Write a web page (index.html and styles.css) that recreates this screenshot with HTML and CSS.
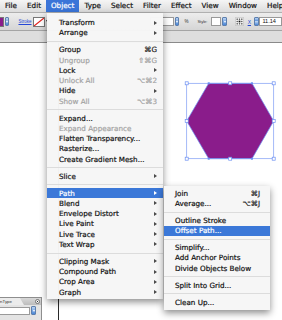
FILE: index.html
```html
<!DOCTYPE html>
<html lang="en">
<head>
    <meta charset="UTF-8">
    <title>Illustrator - Object menu</title>
    <link rel="stylesheet" href="styles.css">
</head>
<body>
<div class="screen">

    <div class="menubar">
        <span class="mb-item">File</span>
        <span class="mb-item">Edit</span>
        <span class="mb-item active">Object</span>
        <span class="mb-item">Type</span>
        <span class="mb-item">Select</span>
        <span class="mb-item">Filter</span>
        <span class="mb-item">Effect</span>
        <span class="mb-item">View</span>
        <span class="mb-item">Window</span>
        <span class="mb-item">Help</span>
    </div>

    <div class="controlbar">
        <span class="swatch fill"></span>
        <span class="drop"></span>
        <span class="link stroke-link">Stroke</span>
        <span class="swatch stroke">
            <svg width="10" height="8" viewBox="0 0 10 8"><line x1="0" y1="8" x2="10" y2="0" stroke="#e0201c" stroke-width="1.2"/></svg>
        </span>
        <span class="drop plain"></span>
        <span class="field opacity"></span>
        <span class="drop"></span>
        <span class="label pct">%</span>
        <span class="label style-label">Style:</span>
        <span class="field style"></span>
        <span class="drop"></span>
        <span class="refpoint">
            <svg width="9" height="9" viewBox="0 0 9 9">
                <rect x="0.5" y="0.5" width="8" height="8" fill="#fff" stroke="#888" stroke-width="0.6" stroke-dasharray="1 1"/>
                <rect x="1.5" y="1.5" width="1.4" height="1.4" fill="#555"/>
                <rect x="3.8" y="1.5" width="1.4" height="1.4" fill="#555"/>
                <rect x="6.1" y="1.5" width="1.4" height="1.4" fill="#555"/>
                <rect x="1.5" y="3.8" width="1.4" height="1.4" fill="#555"/>
                <rect x="3.6" y="3.6" width="1.8" height="1.8" fill="#111"/>
                <rect x="6.1" y="3.8" width="1.4" height="1.4" fill="#555"/>
                <rect x="1.5" y="6.1" width="1.4" height="1.4" fill="#555"/>
                <rect x="3.8" y="6.1" width="1.4" height="1.4" fill="#555"/>
                <rect x="6.1" y="6.1" width="1.4" height="1.4" fill="#555"/>
            </svg>
        </span>
        <span class="link x-link">X</span>
        <span class="stepper"></span>
        <span class="field xval">11.14</span>
    </div>

    <div class="docbar"></div>

    <div class="canvas">
        <div class="artboard-edge"></div>

        <svg class="hexagon" width="100" height="86" viewBox="180 78 100 86">
            <polygon points="208.7,83.3 252,83.3 273.7,121 252,158.7 208.7,158.7 186.7,121" fill="#8a1c8b" stroke="#6b8ff2" stroke-width="0.7"/>
            <rect x="186.7" y="83.3" width="87" height="75.4" fill="none" stroke="#7d9cf4" stroke-width="0.7"/>
            <g fill="#fff" stroke="#6b8ff2" stroke-width="0.7">
                <rect x="185.2" y="81.8" width="3" height="3"/>
                <rect x="228.7" y="81.8" width="3" height="3"/>
                <rect x="272.2" y="81.8" width="3" height="3"/>
                <rect x="185.2" y="119.5" width="3" height="3"/>
                <rect x="272.2" y="119.5" width="3" height="3"/>
                <rect x="185.2" y="157.2" width="3" height="3"/>
                <rect x="228.7" y="157.2" width="3" height="3"/>
                <rect x="272.2" y="157.2" width="3" height="3"/>
            </g>
            <g fill="#6b8ff2">
                <rect x="207.7" y="82.3" width="2" height="2"/>
                <rect x="251" y="82.3" width="2" height="2"/>
                <rect x="207.7" y="157.7" width="2" height="2"/>
                <rect x="251" y="157.7" width="2" height="2"/>
            </g>
        </svg>

        <div class="panel">
            <div class="panel-head">
                <span class="panel-tab">OpenType</span>
                <span class="panel-btn"></span>
            </div>
            <div class="panel-body">
                <span class="panel-field"></span>
                <span class="drop"></span>
            </div>
        </div>
    </div>

    <div class="menu object-menu">
        <div class="item"><span>Transform</span><i class="arrow"></i></div>
        <div class="item"><span>Arrange</span><i class="arrow"></i></div>
        <div class="sep"></div>
        <div class="item"><span>Group</span><span class="key">⌘G</span></div>
        <div class="item off"><span>Ungroup</span><span class="key">⇧⌘G</span></div>
        <div class="item"><span>Lock</span><i class="arrow"></i></div>
        <div class="item off"><span>Unlock All</span><span class="key">⌥⌘2</span></div>
        <div class="item"><span>Hide</span><i class="arrow"></i></div>
        <div class="item off"><span>Show All</span><span class="key">⌥⌘3</span></div>
        <div class="sep"></div>
        <div class="item"><span>Expand...</span></div>
        <div class="item off"><span>Expand Appearance</span></div>
        <div class="item"><span>Flatten Transparency...</span></div>
        <div class="item"><span>Rasterize...</span></div>
        <div class="item"><span>Create Gradient Mesh...</span></div>
        <div class="sep"></div>
        <div class="item"><span>Slice</span><i class="arrow"></i></div>
        <div class="sep"></div>
        <div class="item active"><span>Path</span><i class="arrow"></i></div>
        <div class="item"><span>Blend</span><i class="arrow"></i></div>
        <div class="item"><span>Envelope Distort</span><i class="arrow"></i></div>
        <div class="item"><span>Live Paint</span><i class="arrow"></i></div>
        <div class="item"><span>Live Trace</span><i class="arrow"></i></div>
        <div class="item"><span>Text Wrap</span><i class="arrow"></i></div>
        <div class="sep"></div>
        <div class="item"><span>Clipping Mask</span><i class="arrow"></i></div>
        <div class="item"><span>Compound Path</span><i class="arrow"></i></div>
        <div class="item"><span>Crop Area</span><i class="arrow"></i></div>
        <div class="item"><span>Graph</span><i class="arrow"></i></div>
    </div>

    <div class="menu path-menu">
        <div class="item"><span>Join</span><span class="key">⌘J</span></div>
        <div class="item"><span>Average...</span><span class="key">⌥⌘J</span></div>
        <div class="sep"></div>
        <div class="item"><span>Outline Stroke</span></div>
        <div class="item active"><span>Offset Path...</span></div>
        <div class="sep"></div>
        <div class="item"><span>Simplify...</span></div>
        <div class="item"><span>Add Anchor Points</span></div>
        <div class="item"><span>Divide Objects Below</span></div>
        <div class="sep"></div>
        <div class="item"><span>Split Into Grid...</span></div>
        <div class="sep"></div>
        <div class="item"><span>Clean Up...</span></div>
    </div>

</div>
</body>
</html>
```

FILE: styles.css
```css
* {
    box-sizing: border-box;
}
body {
    margin: 0;
    background-color: #fff;
    font-family: "DejaVu Sans", sans-serif;
}
.screen {
    position: relative;
    width: 282px;
    height: 320px;
    overflow: hidden;
    background-color: #fff;
}

/* top menu bar */
.menubar {
    display: flex;
    height: 13px;
    background: linear-gradient(#f5f5f5, #dcdcdc);
    border-bottom: 1px solid #b0b0b0;
    font-size: 7.2px;
    line-height: 12px;
    white-space: nowrap;
    -webkit-text-stroke: 0.2px currentColor;
}
.mb-item {
    padding: 0 5px;
    color: #111;
}
.mb-item.active {
    background-color: #3a75d8;
    color: #fff;
}

/* control panel */
.controlbar {
    display: flex;
    align-items: center;
    height: 18px;
    background: linear-gradient(#ededed, #d5d5d5);
    border-bottom: 1px solid #a5a5a5;
    font-family: "Liberation Sans", sans-serif;
    font-size: 4.5px;
    white-space: nowrap;
}
.swatch {
    height: 10px;
    border: 1px solid #777;
}
.swatch.fill {
    width: 9px;
    margin-left: -4px;
    background-color: #8a1c8b;
}
.swatch.stroke {
    display: flex;
    align-items: center;
    justify-content: center;
    width: 12px;
    margin-left: 2px;
    background-color: #fff;
}
.drop {
    position: relative;
    width: 5px;
    height: 9px;
    margin-left: 1px;
    border-radius: 1px;
    background: linear-gradient(#b9d3f3, #4a86d6);
    border: 1px solid #5d7fae;
}
.drop::after {
    content: "";
    position: absolute;
    left: 0.5px;
    top: 3px;
    border-top: 2px solid #fff;
    border-left: 1.5px solid transparent;
    border-right: 1.5px solid transparent;
}
.drop.plain {
    width: 4px;
    margin-left: 0;
    background: none;
    border: none;
}
.drop.plain::after {
    border-top-color: #333;
}
.link {
    color: #2447d6;
    text-decoration: underline;
}
.stroke-link {
    margin-left: 9px;
}
.field {
    height: 9px;
    background-color: #fff;
    border: 1px solid #999;
}
.field.opacity {
    width: 28px;
    margin-left: 101px;
}
.field.style {
    width: 11px;
    margin-left: 4px;
}
.field.xval {
    width: 26px;
    padding-left: 2px;
    font-size: 5.6px;
    line-height: 7px;
    color: #111;
}
.label {
    color: #333;
}
.pct {
    margin-left: 5px;
}
.style-label {
    margin-left: 9px;
    font-size: 4px;
}
.refpoint {
    display: flex;
    margin-left: 8px;
}
.x-link {
    margin-left: 4px;
    font-size: 5px;
}
.stepper {
    width: 6px;
    height: 9px;
    margin-left: 3px;
    border-radius: 1px;
    background: linear-gradient(#b9d3f3 0%, #4a86d6 50%, #b9d3f3 50%, #4a86d6 100%);
    border: 1px solid #5d7fae;
}

/* document window header */
.docbar {
    height: 12px;
    background-color: #dedede;
    border-bottom: 1px solid #8a8a8a;
}

/* artboard */
.canvas {
    position: relative;
    height: 277px;
    background-color: #fff;
}
.artboard-edge {
    position: absolute;
    left: 58px;
    top: 0;
    bottom: 0;
    width: 1px;
    background-color: #2a2a2a;
}
.hexagon {
    position: absolute;
    left: 180px;
    top: 35px;
}

/* floating panel, bottom left */
.panel {
    position: absolute;
    left: 0;
    top: 254px;
    width: 42px;
    height: 30px;
    background-color: #e4e4e4;
    border-top: 1px solid #8e8e8e;
    border-right: 1px solid #8e8e8e;
}
.panel-head {
    display: flex;
    align-items: center;
    height: 7px;
    background: linear-gradient(#d8d8d8, #bcbcbc);
    font-family: "Liberation Sans", sans-serif;
    font-size: 4.3px;
}
.panel-tab {
    height: 7px;
    width: 34px;
    margin-left: -10px;
    padding-left: 2px;
    line-height: 7px;
    color: #333;
    background-color: #ececec;
    clip-path: polygon(0 0, 88% 0, 100% 100%, 0 100%);
}
.panel-btn {
    width: 5px;
    height: 5px;
    margin-left: 11px;
    border-radius: 50%;
    border: 0.6px solid #777;
    background: radial-gradient(#333 25%, #f4f4f4 30%);
}
.panel-body {
    display: flex;
    align-items: center;
    padding-top: 1px;
}
.panel-field {
    width: 31px;
    height: 8px;
    margin-left: -1px;
    background-color: #fff;
    border: 1px solid #9a9a9a;
}

/* dropdown menus */
.menu {
    position: absolute;
    background-color: rgba(246, 246, 246, 0.98);
    box-shadow: 0 3px 7px rgba(0, 0, 0, 0.45);
    font-size: 7.2px;
    white-space: nowrap;
    color: #111;
    -webkit-text-stroke: 0.2px currentColor;
}
.object-menu {
    left: 47px;
    top: 13px;
    width: 116px;
    padding: 4.5px 0 2px;
}
.path-menu {
    left: 164px;
    top: 185.5px;
    width: 106px;
    padding: 2.5px 0 3px;
}
.item {
    display: flex;
    align-items: center;
    justify-content: space-between;
    height: 10.25px;
    padding: 0 6px 0 12px;
}
.path-menu .item {
    padding: 0 10px 0 11px;
}
.item.off {
    color: #a3a3a3;
}
.item.active {
    background-color: #3b78d8;
    color: #fff;
}
.key {
    color: #222;
}
.item.off .key {
    color: #a3a3a3;
}
.arrow {
    width: 0;
    height: 0;
    border-left: 3.5px solid #4a4a4a;
    border-top: 2.5px solid transparent;
    border-bottom: 2.5px solid transparent;
}
.item.active .arrow {
    border-left-color: #fff;
}
.sep {
    height: 6.75px;
    padding-top: 3px;
}
.sep::after {
    content: "";
    display: block;
    height: 1px;
    background-color: #dcdcdc;
}
```
